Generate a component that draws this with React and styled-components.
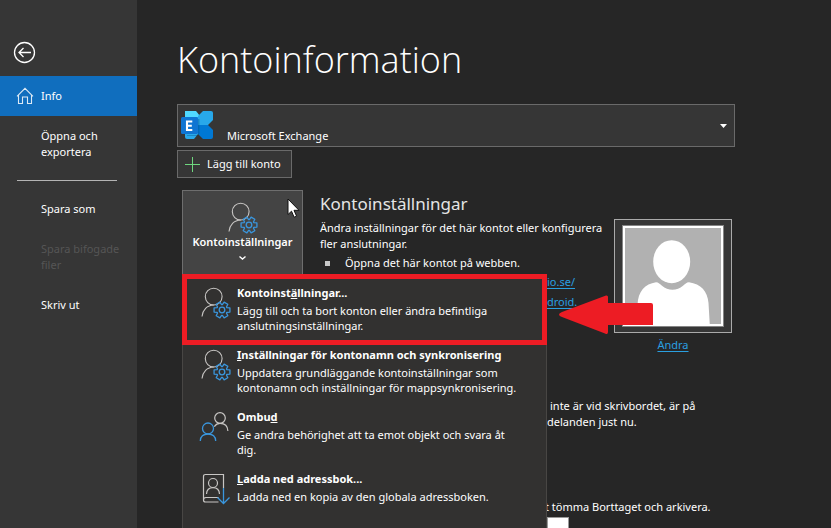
import React from "react";
import styled, { createGlobalStyle, css } from "styled-components";

const GlobalStyle = createGlobalStyle`
  *, *::before, *::after { box-sizing: border-box; }
  body {
    margin: 0;
    background: #262626;
    color: #fff;
    font: 11px/16px "Noto Sans", "Open Sans", sans-serif;
  }
  button, select { font: inherit; color: inherit; }
  h1, h2, p, ul { margin: 0; padding: 0; }
  ul { list-style: none; }
  svg { overflow: visible; }
`;

const Page = styled.div`
  display: grid;
  grid-template-columns: 137px 1fr;
  height: 100vh;
  overflow: hidden;
`;

const Sidebar = styled.nav`
  background: #363636;
  padding-top: 41px;
`;

const BackButton = styled.button`
  display: block;
  margin: 0 0 12px 13px;
  padding: 0;
  border: 0;
  background: none;
  svg { display: block; }
`;

const NavItem = styled.button`
  display: flex;
  align-items: center;
  width: 100%;
  min-height: 40px;
  padding: 12px 12px 12px 41px;
  border: 0;
  background: none;
  text-align: left;
  &:disabled { color: #555; }
  ${(p) => p.$active && css`
    padding: 11px 12px 11px 16px;
    gap: 7px;
    background: #106ebe;
  `}
`;

const NavDivider = styled.hr`
  height: 1px;
  margin: 8px 20px 8px 17px;
  border: 0;
  background: #b4b4b4;
`;

const Main = styled.main`
  min-width: 0;
  padding: 32px 96px 0 40px;
`;

const Title = styled.h1`
  font-family: "Open Sans", "Noto Sans", sans-serif;
  font-size: 36px;
  line-height: 56px;
  font-weight: 300;
`;

const AccountPicker = styled.div`
  display: grid;
  margin-top: 16px;
  > * { grid-area: 1 / 1; pointer-events: none; }
  > select { pointer-events: auto; }
  > svg { margin: 6px 0 0 3px; }
  > svg:last-child { justify-self: end; margin: 20px 7px 0 0; }
`;

const AccountSelect = styled.select`
  appearance: none;
  width: 100%;
  height: 43px;
  padding: 20px 24px 0 49px;
  border: 1px solid #6a6a6a;
  border-radius: 0;
  background: #363636;
`;

const AddButton = styled.button`
  display: flex;
  align-items: center;
  gap: 7px;
  height: 28px;
  margin-top: 3px;
  padding: 0 10px 0 7px;
  border: 1px solid #6a6a6a;
  background: #363636;
`;

const SettingsSection = styled.section`
  display: grid;
  grid-template-columns: 121px 1fr 118px;
  padding: 12px 3px 0 5px;
`;

const MenuAnchor = styled.div`
  position: relative;
`;

const Tile = styled.button`
  display: flex;
  flex-direction: column;
  align-items: center;
  width: 100%;
  height: 92px;
  padding: 11px 0 0;
  border: 1px solid #6e6e6e;
  background: #444;
  font-weight: 600;
  svg:last-child { margin-top: 6px; }
`;

const Menu = styled.ul`
  position: absolute;
  z-index: 1;
  top: 84px;
  left: 0;
  width: 365px;
  padding: 7px 0 16px;
  border: 1px solid #484644;
  border-top: 0;
  background: #323130;
`;

const MenuEntry = styled.li`
  position: relative;
  ${(p) => p.$marked && css`
    &::after {
      content: "";
      position: absolute;
      inset: -7px -1px -2px;
      border: 5px solid #ed1c24;
      pointer-events: none;
    }
  `}
`;

const MenuButton = styled.button`
  display: grid;
  grid-template-columns: 30px 1fr;
  column-gap: 6px;
  align-items: start;
  width: 100%;
  min-height: 62px;
  padding: 3px 24px 0 18px;
  border: 0;
  background: none;
  text-align: left;
  svg { margin-top: 3px; }
`;

const EntryTitle = styled.strong`
  display: block;
  margin-bottom: 1px;
  line-height: 18px;
  font-weight: 700;
`;

const EntryText = styled.span`
  display: block;
  line-height: 15px;
`;

const Details = styled.div`
  min-width: 0;
  padding-left: 17px;
`;

const SectionTitle = styled.h2`
  font-size: 17px;
  line-height: 28px;
  margin-bottom: 2px;
  font-weight: 400;
  color: #e4e4e4;
  white-space: nowrap;
`;

const Bullets = styled.ul`
  padding: 3px 0 2px 5px;
  li { display: flex; align-items: center; gap: 15px; white-space: nowrap; }
  li::before { content: ""; width: 5px; height: 5px; background: #c8c8c8; }
`;

const Link = styled.a`
  color: #2a9fe0;
  text-underline-offset: 2px;
`;

const LinkList = styled.div`
  display: grid;
  justify-items: start;
  row-gap: 4px;
  padding: 1px 0 0 227px;
`;

const Aside = styled.div`
  display: flex;
  flex-direction: column;
  align-items: center;
  gap: 4px;
  padding-top: 29px;
`;

const PhotoButton = styled.button`
  display: block;
  width: 100%;
  padding: 5px 7px;
  border: 1px solid #aaa;
  background: #363636;
  svg { display: block; }
`;

const SideNote = styled.p`
  padding: ${(p) => p.$top}px 0 0 ${(p) => p.$indent}px;
  white-space: nowrap;
`;

const BlankTile = styled.div`
  width: 22px;
  height: 40px;
  margin: 2px 0 0 370px;
  border: 1px solid #999;
  background: #fff;
`;

const Pointer = styled.svg`
  position: absolute;
  top: 8px;
  left: 105px;
  pointer-events: none;
`;

const CalloutArrow = styled.svg`
  position: absolute;
  z-index: 2;
  top: 104px;
  left: 376px;
  pointer-events: none;
`;

const gearPoints = Array.from({ length: 6 }, (_, i) =>
  [[-26, 5.4], [-15, 8.2], [15, 8.2], [26, 5.4]].map(([offset, radius]) => {
    const a = ((i * 60 + offset) * Math.PI) / 180;
    return `${(21 + radius * Math.cos(a)).toFixed(2)},${(23 + radius * Math.sin(a)).toFixed(2)}`;
  }).join(" ")
).join(" ");

const PersonGear = () => (
  <svg width="30" height="32" viewBox="0 0 30 32" fill="none" stroke="#c8c6c4" strokeWidth="1.1" aria-hidden="true">
    <circle cx="12.7" cy="9.6" r="8.4" />
    <path d="M1 29.5C1.6 23 6 18.2 12.8 18" />
    <g stroke="#3a96dd" strokeWidth="1.3" strokeLinejoin="round">
      <polygon points={gearPoints} />
      <circle cx="21" cy="23" r="2.8" />
    </g>
  </svg>
);

const TwoPeople = () => (
  <svg width="30" height="32" viewBox="0 0 30 32" fill="none" stroke="#c8c6c4" strokeWidth="1.2" aria-hidden="true">
    <circle cx="19" cy="7" r="5.3" />
    <path d="M13.3 15.6c1.5-2.2 3.3-3.2 5.7-3.2 4.6 0 7.7 2.9 7.9 7.6" />
    <g stroke="#3a96dd" strokeWidth="1.3">
      <circle cx="7" cy="17.5" r="5.5" />
      <path d="M-.7 30C-.5 25.600 2.500 23 7 23s7.500 2.600 7.700 7" />
    </g>
  </svg>
);

const AddressBook = () => (
  <svg width="30" height="32" viewBox="0 0 30 32" fill="none" stroke="#c8c6c4" strokeWidth="1.2" aria-hidden="true">
    <path d="M22.500 15V1.500H4.500Q2.500 1.500 2.500 3.500V27Q2.500 29 4.500 29H17.500M2.500 27Q2.500 24.500 5 24.500H17.500" />
    <circle cx="12" cy="10" r="4.5" />
    <path d="M5.500 21c.2-4 2.700-6.400 6.500-6.400s6.300 2.400 6.500 6.400" />
    <path d="M22.500 15v15M16.500 24.500l6 6 6-6" stroke="#3a96dd" strokeWidth="1.3" />
  </svg>
);

const ExchangeLogo = () => (
  <svg width="34" height="31" viewBox="0 0 34 31" aria-hidden="true">
    <path d="M5 1h11l4 5v6H5z" fill="#50d9ff" />
    <path d="M5 7h14v9l-1 8-4 5H7q-2 0-2-2z" fill="#28a8ea" />
    <path d="M23 1h8q2 0 2 2v7l-5 5H18V6z" fill="#28a8ea" />
    <path d="M18 15h10l5 5v7q0 2-2 2h-8l-5-5z" fill="#0078d4" />
    <path d="M7 25h11V9h1.500v14.500L17 26H7z" fill="#064a7a" opacity=".35" />
    <rect x="1" y="7" width="17" height="17" rx="1.5" fill="#0f75d2" />
    <path d="M12.300 11.500H7v8.500h5.300M7 15.700h4.800" fill="none" stroke="#fff" strokeWidth="2.1" />
  </svg>
);

const Silhouette = () => (
  <svg width="102" height="102" viewBox="0 0 102 102" aria-hidden="true">
    <rect width="102" height="102" fill="#858585" />
    <rect x="1" y="1" width="100" height="100" fill="#fff" />
    <rect x="3" y="3" width="96" height="96" fill="#b1b1b1" />
    <ellipse cx="49.7" cy="36.7" rx="18.5" ry="21.5" fill="#fff" />
    <path d="M15.500 100V80C16 66 23 59 34 57.200c2.500 0 4 1.800 6 3.600 6 5.200 15 5.200 21 0 2-1.800 3.500-3.600 6-3.600C79 59 85.500 66 86.500 78l1.300 22z" fill="#fff" />
  </svg>
);

const entries = [
  { before: "Kontoinst", key: "ä", after: "llningar...", text: "Lägg till och ta bort konton eller ändra befintliga anslutningsinställningar.", Icon: PersonGear, marked: true },
  { before: "", key: "I", after: "nställningar för kontonamn och synkronisering", text: "Uppdatera grundläggande kontoinställningar som kontonamn och inställningar för mappsynkronisering.", Icon: PersonGear },
  { before: "Ombu", key: "d", after: "", text: "Ge andra behörighet att ta emot objekt och svara åt dig.", Icon: TwoPeople },
  { before: "", key: "L", after: "adda ned adressbok...", text: "Ladda ned en kopia av den globala adressboken.", Icon: AddressBook },
];

export default function App() {
  return (
    <Page>
      <GlobalStyle />
      <Sidebar>
        <BackButton aria-label="Tillbaka">
          <svg width="23" height="23" viewBox="0 0 23 23" fill="none" stroke="#fff" strokeWidth="1.3">
            <circle cx="11.5" cy="11.5" r="10" />
            <path d="M18 11.500H6M10.500 7L6 11.500l4.500 4.500" />
          </svg>
        </BackButton>
        <NavItem $active aria-current="page">
          <svg width="18" height="18" viewBox="0 0 18 18" fill="none" stroke="#dbe9f5" strokeWidth="1.1" aria-hidden="true">
            <path d="M1 9.300L9 1.300l8 8M2.500 8v8.500h4V10h5v6.500h4V8" />
          </svg>
          Info
        </NavItem>
        <NavItem>Öppna och exportera</NavItem>
        <NavDivider />
        <NavItem>Spara som</NavItem>
        <NavItem disabled>Spara bifogade filer</NavItem>
        <NavItem>Skriv ut</NavItem>
      </Sidebar>
      <Main>
        <Title>Kontoinformation</Title>
        <AccountPicker>
          <AccountSelect aria-label="Konto">
            <option>Microsoft Exchange</option>
          </AccountSelect>
          <ExchangeLogo />
          <svg width="9" height="5" viewBox="0 0 9 5" aria-hidden="true">
            <path d="M1 0h7L4.500 4z" fill="#fff" />
          </svg>
        </AccountPicker>
        <AddButton>
          <svg width="15" height="15" viewBox="0 0 15 15" stroke="#6fd67f" aria-hidden="true">
            <path d="M7.500 0v15M0 7.500h15" />
          </svg>
          Lägg till konto
        </AddButton>
        <SettingsSection>
          <MenuAnchor>
            <Tile aria-haspopup="menu" aria-expanded="true">
              <PersonGear />
              Kontoinställningar
              <svg width="7" height="4" viewBox="0 0 7 4" fill="none" stroke="#fff" strokeWidth="1.4" aria-hidden="true">
                <path d="M.5.5l3 2.500 3-2.500" />
              </svg>
            </Tile>
            <Menu>
              {entries.map(({ before, key, after, text, Icon, marked }) => (
                <MenuEntry key={text} $marked={marked}>
                  <MenuButton>
                    <Icon />
                    <span>
                      <EntryTitle>{before}<u>{key}</u>{after}</EntryTitle>
                      <EntryText>{text}</EntryText>
                    </span>
                  </MenuButton>
                </MenuEntry>
              ))}
            </Menu>
            <Pointer width="13" height="21" viewBox="0 0 13 21" aria-hidden="true">
              <path d="M1 1v15.500l3.500-3.300 2.600 6 2.500-1-2.600-5.900H12z" fill="#fff" stroke="#111" />
            </Pointer>
            <CalloutArrow width="96" height="42" viewBox="0 0 96 42" aria-hidden="true">
              <path d="M1 20.500Q1 19 4 18L48 1.500Q50 1 50 3V9H93Q95 9 95 11V31H50V38Q50 41 47 39.500L4 23Q1 22 1 20.500z" fill="#ed1c24" />
            </CalloutArrow>
          </MenuAnchor>
          <Details>
            <SectionTitle>Kontoinställningar</SectionTitle>
            <p>Ändra inställningar för det här kontot eller konfigurera fler anslutningar.</p>
            <Bullets>
              <li>Öppna det här kontot på webben.</li>
            </Bullets>
            <LinkList>
              <Link href="#webb">io.se/</Link>
              <Link href="#app">droid.</Link>
            </LinkList>
          </Details>
          <Aside>
            <PhotoButton aria-label="Profilbild"><Silhouette /></PhotoButton>
            <Link href="#bild">Ändra</Link>
          </Aside>
        </SettingsSection>
        <SideNote $top={45} $indent={373}>inte är vid skrivbordet, är på</SideNote>
        <SideNote $top={0} $indent={370}>delanden just nu.</SideNote>
        <SideNote $top={69} $indent={368}>t tömma Borttaget och arkivera.</SideNote>
        <BlankTile />
      </Main>
    </Page>
  );
}
